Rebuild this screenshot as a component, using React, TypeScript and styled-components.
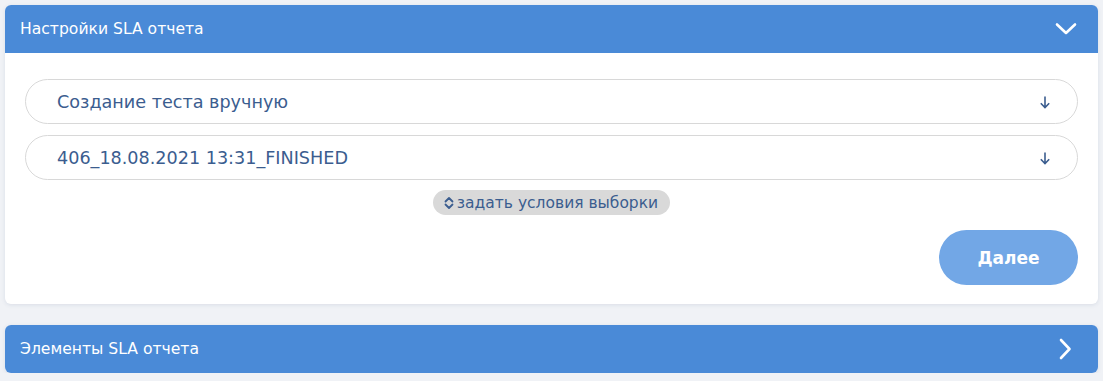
import styled, { createGlobalStyle } from 'styled-components';
import { useState } from 'react';

const GlobalStyle = createGlobalStyle`
  body {
    margin: 0;
    background-color: #f0f2f6;
    font-family: 'DejaVu Sans', 'Noto Sans', sans-serif;
  }
`;

const Page = styled.div`
  padding: 5px 5px 0 5px;
  display: flex;
  flex-direction: column;
  gap: 21px;
`;

const Card = styled.section`
  background-color: #fff;
  border-radius: 6px;
  box-shadow: 0 1px 4px rgba(60, 80, 120, 0.12);
  overflow: hidden;
`;

const CardHeader = styled.header`
  background-color: #4a8ad7;
  color: #fff;
  height: 48px;
  display: flex;
  align-items: center;
  justify-content: space-between;
  padding: 0 21px 0 15px;
  font-size: 15.6px;
  cursor: pointer;
`;

const CardBody = styled.div`
  padding: 26px 20px 19px 20px;
  display: flex;
  flex-direction: column;
`;

const Select = styled.div`
  height: 45px;
  box-sizing: border-box;
  border: 1px solid #d8d8d8;
  border-radius: 23px;
  display: flex;
  align-items: center;
  justify-content: space-between;
  padding: 0 26px 0 31px;
  color: #3b5d8f;
  font-size: 17.6px;
  & + & {
    margin-top: 11px;
  }
`;

const Filter = styled.button`
  align-self: center;
  margin-top: 10px;
  height: 25px;
  border: none;
  border-radius: 13px;
  background-color: #d9d9d9;
  color: #3b5d8f;
  font-family: inherit;
  font-size: 15.5px;
  padding: 0 12px 0 11px;
  display: flex;
  align-items: center;
  gap: 3px;
  cursor: pointer;
`;

const Actions = styled.div`
  display: flex;
  justify-content: flex-end;
  margin-top: 15px;
`;

const NextButton = styled.button`
  width: 139px;
  height: 55px;
  border: none;
  border-radius: 28px;
  background-color: #72a7e6;
  color: #fff;
  font-family: inherit;
  font-size: 17px;
  font-weight: 600;
  cursor: pointer;
`;

function ArrowDown() {
  return (
    <svg width='12' height='14' viewBox='0 0 12 14' fill='none' stroke='#3b5d8f' strokeWidth='1.6'>
      <path d='M6 1.5V12.5M1.8 8.3L6 12.5L10.2 8.3' />
    </svg>
  );
}

function Chevron({ open }: { open: boolean }) {
  return (
    <svg width='22' height='22' viewBox='0 0 22 22' fill='none' stroke='#fff' strokeWidth='2.6' strokeLinecap='round' strokeLinejoin='round'>
      {open ? <path d='M2 6.5L11 15L20 6.5' /> : <path d='M6 2L14.5 11L6 20' />}
    </svg>
  );
}

function SortIcon() {
  return (
    <svg width='10' height='14' viewBox='0 0 10 14' fill='none' stroke='#3b5d8f' strokeWidth='1.8' strokeLinecap='round' strokeLinejoin='round'>
      <path d='M1.5 5.5L5 2L8.5 5.5M1.5 8.5L5 12L8.5 8.5' />
    </svg>
  );
}

export default function App() {
  const [settingsOpen, setSettingsOpen] = useState(true);
  const [elementsOpen, setElementsOpen] = useState(false);

  return (
    <>
      <GlobalStyle />
      <Page>
        <Card>
          <CardHeader onClick={() => setSettingsOpen(!settingsOpen)}>
            <span>Настройки SLA отчета</span>
            <Chevron open={settingsOpen} />
          </CardHeader>
          {settingsOpen && (
            <CardBody>
              <Select>
                <span>Создание теста вручную</span>
                <ArrowDown />
              </Select>
              <Select>
                <span>406_18.08.2021 13:31_FINISHED</span>
                <ArrowDown />
              </Select>
              <Filter>
                <SortIcon />
                задать условия выборки
              </Filter>
              <Actions>
                <NextButton>Далее</NextButton>
              </Actions>
            </CardBody>
          )}
        </Card>
        <Card>
          <CardHeader onClick={() => setElementsOpen(!elementsOpen)}>
            <span>Элементы SLA отчета</span>
            <Chevron open={elementsOpen} />
          </CardHeader>
        </Card>
      </Page>
    </>
  );
}
